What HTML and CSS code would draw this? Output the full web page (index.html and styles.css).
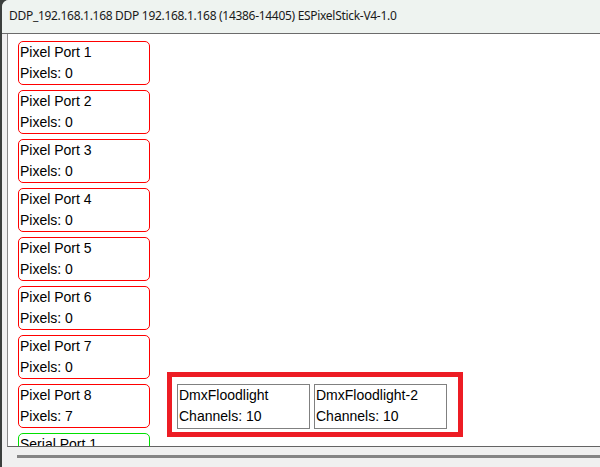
FILE: index.html
```html
<!DOCTYPE html>
<html>
<head>
<meta charset="utf-8">
<link rel="stylesheet" href="styles.css">
</head>
<body>
<div class="window">
  <div class="titlebar"><span class="title">DDP_192.168.1.168 DDP 192.168.1.168 (14386-14405) ESPixelStick-V4-1.0</span></div>
  <div class="content">
    <div class="ports">
      <div class="port"><div>Pixel Port 1</div><div>Pixels: 0</div></div>
      <div class="port"><div>Pixel Port 2</div><div>Pixels: 0</div></div>
      <div class="port"><div>Pixel Port 3</div><div>Pixels: 0</div></div>
      <div class="port"><div>Pixel Port 4</div><div>Pixels: 0</div></div>
      <div class="port"><div>Pixel Port 5</div><div>Pixels: 0</div></div>
      <div class="port"><div>Pixel Port 6</div><div>Pixels: 0</div></div>
      <div class="port"><div>Pixel Port 7</div><div>Pixels: 0</div></div>
      <div class="port"><div>Pixel Port 8</div><div>Pixels: 7</div></div>
      <div class="port serial"><div>Serial Port 1</div><div>Pixels: 0</div></div>
    </div>
    <div class="dmx-frame">
      <div class="dmx"><div>DmxFloodlight</div><div>Channels: 10</div></div>
      <div class="dmx"><div>DmxFloodlight-2</div><div>Channels: 10</div></div>
    </div>
  </div>
  <div class="hscroll"><div class="thumb"></div></div>
</div>
</body>
</html>
```
FILE: styles.css
```css
html, body {
  margin: 0;
  padding: 0;
}
body {
  width: 600px;
  height: 467px;
  overflow: hidden;
  background: #3b3f3d;
}
.window {
  margin-left: 2px;
  height: 467px;
  display: flex;
  flex-direction: column;
  background: #f0f0f0;
  border-top-left-radius: 7px;
  overflow: hidden;
}
.titlebar {
  flex: none;
  background: #eef3f0;
  border-bottom: 1px solid #6b6b6b;
  display: flex;
  align-items: center;
  padding-left: 7px;
  box-sizing: border-box;
  height: 34px;
}
.title {
  font-family: "Noto Sans", sans-serif;
  font-size: 12px;
  letter-spacing: -0.3px;
  color: #1a1a1a;
  position: relative;
  top: -1px;
}
.content {
  flex: none;
  height: 413px;
  box-sizing: border-box;
  margin-left: 5px;
  background: #ffffff;
  border-left: 1px solid #8a8a8a;
  border-bottom: 1px solid #646464;
  display: flex;
  overflow: hidden;
  padding: 7px 0 0 10px;
  font-family: "Liberation Sans", Arial, sans-serif;
  font-size: 14px;
  color: #000;
}
.ports {
  flex: none;
  display: flex;
  flex-direction: column;
  gap: 5px;
}
.port {
  width: 132px;
  height: 44px;
  box-sizing: border-box;
  border: 1px solid #ff0000;
  border-radius: 5px;
  padding-left: 1px;
  line-height: 21px;
  flex: none;
}
.port.serial {
  border-color: #00e000;
}
.dmx-frame {
  align-self: flex-end;
  margin: 0 0 9px 17px;
  border: 5px solid #ed1c24;
  display: flex;
  gap: 4px;
  padding: 7px 11px 3px 5px;
}
.dmx {
  width: 133px;
  height: 45px;
  box-sizing: border-box;
  border: 1px solid #808080;
  padding-left: 1px;
  line-height: 21px;
}
.hscroll {
  flex: 1;
  padding: 8px 0 0 15px;
}
.thumb {
  height: 3px;
  background: #858585;
}
```
